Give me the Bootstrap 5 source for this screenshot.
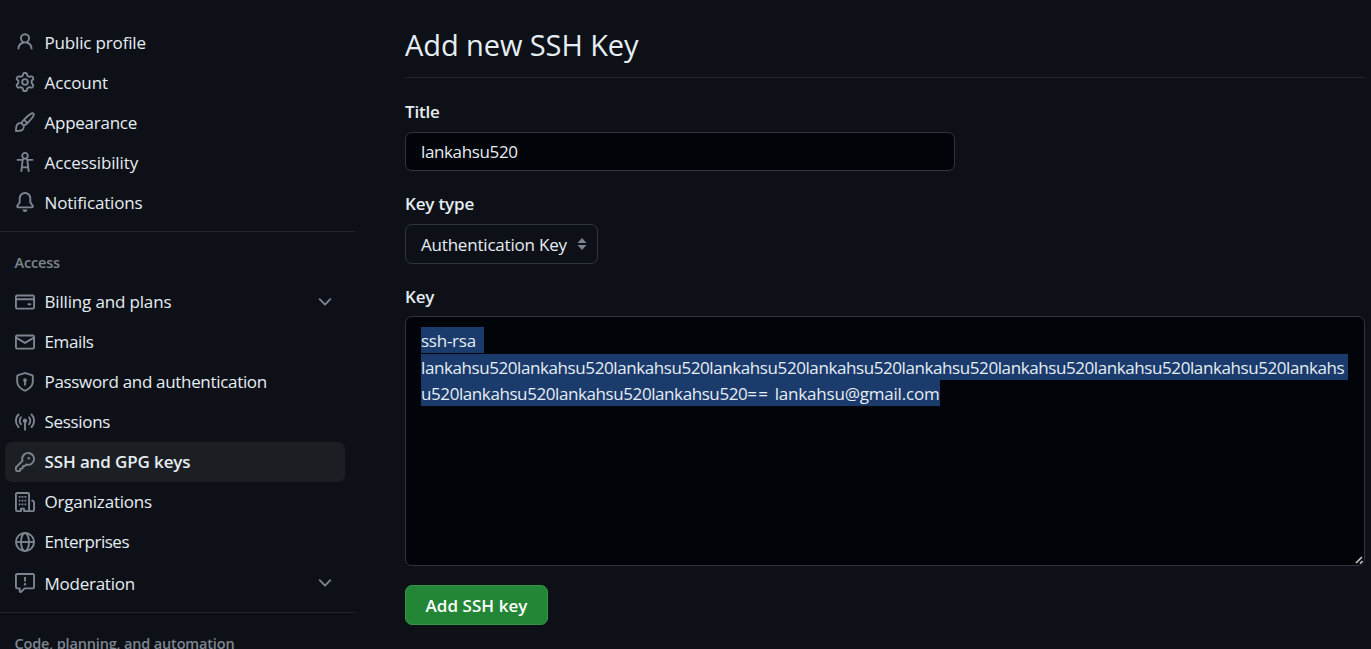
<!DOCTYPE html>
<html lang="en" data-bs-theme="dark">
<head>
<meta charset="utf-8">
<title>Add new SSH Key</title>
<meta name="viewport" content="width=device-width, initial-scale=1">
<link href="https://cdn.jsdelivr.net/npm/bootstrap@5.3.0/dist/css/bootstrap.min.css" rel="stylesheet">
<style>
  body { background: #0d1117; color: #e6edf3; font: 17px/26px "Open Sans", "Noto Sans", sans-serif; letter-spacing: -.16px; height: 649px; overflow: hidden; }
  .sidebar { width: 355px; padding-top: 22px; }
  .side-link { height: 40px; margin: 0 10px 0 5px; padding: 0 10px; gap: 9.5px; border-radius: 7px; color: #e6edf3; white-space: nowrap; }
  .side-link.active { background: #1b1f23; font-weight: 600; letter-spacing: -.125px; }
  .side-link svg { width: 20px; height: 20px; fill: #7d8590; flex: none; }
  .side-link .globe { fill: none; stroke: #7d8590; stroke-width: 1.5; }
  .side-link.tall { height: 42px; }
  .nudge span { padding-top: 2px; }
  .side-rule { height: 1px; background: #21262d; margin: 9px 0 18px; }
  .side-rule.last { margin-top: 8px; }
  .side-head { font-size: 14.5px; font-weight: 600; color: #7d8590; padding-left: 14.5px; margin-bottom: 5.5px; white-space: nowrap; }
  .ls-10 { letter-spacing: -.1px; }
  .ls-20 { letter-spacing: -.2px; }
  .ls-25 { letter-spacing: -.25px; }
  .ls-32 { letter-spacing: -.32px; }
  .ls-37 { letter-spacing: -.368px; }
  .ls-41 { letter-spacing: -.412px; }
  .ls-48 { letter-spacing: -.48px; }
  .ls-wide { letter-spacing: 1.2px; }
  .content { margin-left: 50px; width: 960px; }
  h1 { color: #e6edf3; font-size: 29px; line-height: 45px; font-weight: 400; letter-spacing: -.08px; padding: 22px 0 10px; margin: 0 0 21px; border-bottom: 1px solid #21262d; }
  .field-label { font-weight: 600; height: 26px; margin: 20px 0 7px; display: block; width: max-content; }
  .field-label.tight { margin-bottom: 6px; }
  .form-control.field { font: inherit; color: #e6edf3; background: #010409; border: 1px solid #30363d; border-radius: 7px; padding: 0 15px; }
  .form-control.title-field { width: 550px; height: 39px; padding-top: 1px; letter-spacing: -.37px; }
  .picker { width: 193px; height: 40px; border: 1px solid #30363d; border-radius: 7px; padding: 0 10px 0 15px; }
  .picker span { padding-top: 1px; letter-spacing: -.2px; }
  .form-control.key-field { height: 250px; position: relative; padding-top: 10px; }
  .key-field .sel { background: #1a3b6b; display: block; width: max-content; height: 26px; line-height: 27px; white-space: pre; }
  .key-field .first { margin-bottom: 1px; }
  .grip { position: absolute; right: 1px; bottom: 1px; }
  .btn-add { width: 143px; height: 40px; margin-top: 19px; background: #238636; border: 1px solid #369347; border-radius: 7px; color: #fff; font-weight: 600; font-size: inherit; letter-spacing: .05px; padding: 1px 0 0; }
</style>
</head>
<body>
<div class="d-flex">
  <nav class="sidebar flex-shrink-0">
    <div class="nudge">
    <a class="side-link d-flex align-items-center text-decoration-none"><svg viewBox="0 0 16 16"><path d="M10.561 8.073a6.005 6.005 0 0 1 3.432 5.142.75.75 0 1 1-1.498.07 4.5 4.5 0 0 0-8.99 0 .75.75 0 0 1-1.498-.07 6.004 6.004 0 0 1 3.431-5.142 3.999 3.999 0 1 1 5.123 0ZM10.5 5a2.5 2.5 0 1 0-5 0 2.5 2.5 0 0 0 5 0Z"/></svg><span>Public profile</span></a>
    <a class="side-link d-flex align-items-center text-decoration-none ls-10"><svg viewBox="0 0 16 16"><path d="M8 0a8.2 8.2 0 0 1 .701.031C9.444.095 9.99.645 10.16 1.29l.288 1.107c.018.066.079.158.212.224.231.114.454.243.668.386.123.082.233.09.299.071l1.103-.303c.644-.176 1.392.021 1.82.63.27.385.506.792.704 1.218.315.675.111 1.422-.364 1.891l-.814.806c-.049.048-.098.147-.088.294.016.257.016.515 0 .772-.01.147.038.246.088.294l.814.806c.475.469.679 1.216.364 1.891a7.977 7.977 0 0 1-.704 1.217c-.428.61-1.176.807-1.82.63l-1.102-.302c-.067-.019-.177-.011-.3.071a5.909 5.909 0 0 1-.668.386c-.133.066-.194.158-.211.224l-.29 1.106c-.168.646-.715 1.196-1.458 1.26a8.006 8.006 0 0 1-1.402 0c-.743-.064-1.289-.614-1.458-1.26l-.289-1.106c-.018-.066-.079-.158-.212-.224a5.738 5.738 0 0 1-.668-.386c-.123-.082-.233-.09-.299-.071l-1.103.303c-.644.176-1.392-.021-1.82-.63a8.12 8.12 0 0 1-.704-1.218c-.315-.675-.111-1.422.363-1.891l.815-.806c.05-.048.098-.147.088-.294a6.214 6.214 0 0 1 0-.772c.01-.147-.038-.246-.088-.294l-.815-.806C.635 6.045.431 5.298.746 4.623a7.92 7.92 0 0 1 .704-1.217c.428-.61 1.176-.807 1.82-.63l1.102.302c.067.019.177.011.3-.071.214-.143.437-.272.668-.386.133-.066.194-.158.211-.224l.29-1.106C6.009.645 6.556.095 7.299.03 7.53.01 7.764 0 8 0Zm-.571 1.525c-.036.003-.108.036-.137.146l-.289 1.105c-.147.561-.549.967-.998 1.189-.173.086-.34.183-.5.29-.417.278-.97.423-1.529.27l-1.103-.303c-.109-.03-.175.016-.195.045-.22.312-.412.644-.573.99-.014.031-.021.11.059.19l.815.806c.411.406.562.957.53 1.456a4.709 4.709 0 0 0 0 .582c.032.499-.119 1.05-.53 1.456l-.815.806c-.081.08-.073.159-.059.19.162.346.353.677.573.989.02.03.085.076.195.046l1.102-.303c.56-.153 1.113-.008 1.53.27.161.107.328.204.501.29.447.222.85.629.997 1.189l.289 1.105c.029.109.101.143.137.146a6.6 6.6 0 0 0 1.142 0c.036-.003.108-.036.137-.146l.289-1.105c.147-.561.549-.967.998-1.189.173-.086.34-.183.5-.29.417-.278.97-.423 1.529-.27l1.103.303c.109.029.175-.016.195-.045.22-.313.411-.644.573-.99.014-.031.021-.11-.059-.19l-.815-.806c-.411-.406-.562-.957-.53-1.456a4.709 4.709 0 0 0 0-.582c-.032-.499.119-1.05.53-1.456l.815-.806c.081-.08.073-.159.059-.19a6.464 6.464 0 0 0-.573-.989c-.02-.03-.085-.076-.195-.046l-1.102.303c-.56.153-1.113.008-1.53-.27a4.44 4.44 0 0 0-.501-.29c-.447-.222-.85-.629-.997-1.189l-.289-1.105c-.029-.11-.101-.143-.137-.146a6.6 6.6 0 0 0-1.142 0ZM11 8a3 3 0 1 1-6 0 3 3 0 0 1 6 0ZM9.5 8a1.5 1.5 0 1 0-3.001.001A1.5 1.5 0 0 0 9.5 8Z"/></svg><span>Account</span></a>
    <a class="side-link d-flex align-items-center text-decoration-none ls-25"><svg viewBox="0 0 16 16"><path d="M11.134 1.535c.7-.509 1.416-.942 2.076-1.155.649-.21 1.463-.267 2.069.34.603.601.568 1.411.368 2.07-.202.668-.624 1.39-1.125 2.096-1.011 1.424-2.496 2.987-3.775 4.249-1.098 1.084-2.132 1.839-3.04 2.3a3.744 3.744 0 0 1-1.055 3.217c-.431.431-1.065.691-1.657.861-.614.177-1.294.287-1.914.357A21.151 21.151 0 0 1 .797 16H.743a.75.75 0 0 1-.743-.742v-.054a21.25 21.25 0 0 1 .13-2.284c.067-.647.187-1.287.358-1.914.17-.591.43-1.226.86-1.657a3.746 3.746 0 0 1 3.227-1.054c.466-.893 1.225-1.907 2.314-2.982 1.271-1.255 2.833-2.75 4.245-3.777ZM1.62 13.089c-.051.464-.086.929-.104 1.395.466-.018.932-.053 1.396-.104a10.511 10.511 0 0 0 1.668-.309c.526-.151.856-.325 1.011-.48a2.25 2.25 0 1 0-3.182-3.182c-.155.155-.329.485-.48 1.01a10.515 10.515 0 0 0-.309 1.67Zm10.396-10.34c-1.224.89-2.605 2.189-3.822 3.384l1.718 1.718c1.21-1.205 2.51-2.597 3.387-3.833.47-.662.78-1.227.912-1.662.134-.444.032-.551.009-.575h-.001V1.78c-.014-.014-.113-.113-.548.027-.432.14-.995.462-1.655.942Zm-4.832 7.266-.001.001a9.859 9.859 0 0 0 1.63-1.142L7.155 7.216a9.7 9.7 0 0 0-1.161 1.607c.482.302.889.71 1.19 1.192Z"/></svg><span>Appearance</span></a>
    <a class="side-link d-flex align-items-center text-decoration-none ls-10"><svg viewBox="0 0 16 16"><path d="M9.923 5.302c.063.063.122.129.178.198H14A.75.75 0 0 1 14 7h-3.3l.578 5.163.362 2.997a.75.75 0 0 1-1.49.18L9.868 13H6.132l-.282 2.34a.75.75 0 0 1-1.49-.18l.362-2.997L5.3 7H2a.75.75 0 0 1 0-1.5h3.9a2.54 2.54 0 0 1 .176-.198 3 3 0 1 1 3.847 0ZM9.2 7.073h-.001a1.206 1.206 0 0 0-2.398 0L6.305 11.5h3.39ZM9.5 3a1.5 1.5 0 1 0-3.001.001A1.5 1.5 0 0 0 9.5 3Z"/></svg><span>Accessibility</span></a>
    <a class="side-link d-flex align-items-center text-decoration-none"><svg viewBox="0 0 16 16"><path d="M8 16a2 2 0 0 0 1.985-1.75c.017-.137-.097-.25-.235-.25h-3.5c-.138 0-.252.113-.235.25A2 2 0 0 0 8 16ZM3 5a5 5 0 0 1 10 0v2.947c0 .05.015.098.042.139l1.703 2.555A1.519 1.519 0 0 1 13.482 13H2.518a1.516 1.516 0 0 1-1.263-2.36l1.703-2.554A.255.255 0 0 0 3 7.947Zm5-3.5A3.5 3.5 0 0 0 4.5 5v2.947c0 .346-.102.683-.294.97l-1.703 2.556a.017.017 0 0 0-.003.01l.001.006c0 .002.002.004.004.006l.006.004.007.001h10.964l.007-.001.006-.004.004-.006.001-.007a.017.017 0 0 0-.003-.01l-1.703-2.554a1.745 1.745 0 0 1-.294-.97V5A3.5 3.5 0 0 0 8 1.5Z"/></svg><span>Notifications</span></a>
    </div>
    <div class="side-rule"></div>
    <div class="side-head">Access</div>
    <a class="side-link d-flex align-items-center text-decoration-none"><svg viewBox="0 0 16 16"><path d="M10.75 9a.75.75 0 0 0 0 1.5h1.5a.75.75 0 0 0 0-1.5h-1.5Z"/><path d="M0 3.75C0 2.784.784 2 1.75 2h12.5c.966 0 1.75.784 1.75 1.75v8.5A1.75 1.75 0 0 1 14.25 14H1.75A1.75 1.75 0 0 1 0 12.25ZM14.5 6.5h-13v5.75c0 .138.112.25.25.25h12.5a.25.25 0 0 0 .25-.25Zm0-2.75a.25.25 0 0 0-.25-.25H1.75a.25.25 0 0 0-.25.25V5h13Z"/></svg><span>Billing and plans</span><svg class="ms-auto" viewBox="0 0 16 16"><path d="M12.78 5.22a.749.749 0 0 1 0 1.06l-4.25 4.25a.749.749 0 0 1-1.06 0L3.22 6.28a.749.749 0 1 1 1.06-1.06L8 8.939l3.72-3.719a.749.749 0 0 1 1.06 0Z"/></svg></a>
    <a class="side-link d-flex align-items-center text-decoration-none ls-37"><svg viewBox="0 0 16 16"><path d="M1.75 2h12.5c.966 0 1.75.784 1.75 1.75v8.5A1.75 1.75 0 0 1 14.25 14H1.75A1.75 1.75 0 0 1 0 12.25v-8.5C0 2.784.784 2 1.75 2ZM1.5 12.251c0 .138.112.25.25.25h12.5a.25.25 0 0 0 .25-.25V5.809L8.38 9.397a.75.75 0 0 1-.76 0L1.5 5.809v6.442Zm13-8.181v-.32a.25.25 0 0 0-.25-.25H1.75a.25.25 0 0 0-.25.25v.32L8 7.88Z"/></svg><span>Emails</span></a>
    <a class="side-link d-flex align-items-center text-decoration-none ls-32"><svg viewBox="0 0 16 16"><path d="m8.533.133 5.25 1.68A1.75 1.75 0 0 1 15 3.48V7c0 1.566-.32 3.182-1.303 4.682-.983 1.498-2.585 2.813-5.032 3.855a1.697 1.697 0 0 1-1.33 0c-2.447-1.042-4.049-2.357-5.032-3.855C1.32 10.182 1 8.566 1 7V3.48a1.75 1.75 0 0 1 1.217-1.667l5.25-1.68a1.748 1.748 0 0 1 1.066 0Zm-.61 1.429.001.001-5.25 1.68a.251.251 0 0 0-.174.237V7c0 1.36.275 2.666 1.057 3.859.784 1.194 2.121 2.342 4.366 3.298a.196.196 0 0 0 .154 0c2.245-.957 3.582-2.103 4.366-3.297C13.225 9.666 13.5 8.358 13.5 7V3.48a.25.25 0 0 0-.174-.238l-5.25-1.68a.25.25 0 0 0-.153 0ZM9.5 6.5c0 .536-.286 1.032-.75 1.3v2.45a.75.75 0 0 1-1.5 0V7.8A1.5 1.5 0 1 1 9.5 6.5Z"/></svg><span>Password and authentication</span></a>
    <a class="side-link d-flex align-items-center text-decoration-none ls-32"><svg viewBox="0 0 16 16"><path d="M8.75 8.582v5.668a.75.75 0 0 1-1.5 0V8.582a1.75 1.75 0 1 1 1.5 0Zm3.983-7.125a.75.75 0 0 1 1.06.026A7.976 7.976 0 0 1 16 7c0 2.139-.84 4.083-2.207 5.517a.75.75 0 1 1-1.086-1.034A6.474 6.474 0 0 0 14.5 7a6.474 6.474 0 0 0-1.793-4.483.75.75 0 0 1 .026-1.06Zm-9.466 0c.3.286.312.76.026 1.06A6.474 6.474 0 0 0 1.5 7a6.47 6.47 0 0 0 1.793 4.483.75.75 0 0 1-1.086 1.034A7.973 7.973 0 0 1 0 7c0-2.139.84-4.083 2.207-5.517a.75.75 0 0 1 1.06-.026Zm8.556 2.321A4.988 4.988 0 0 1 13 7a4.988 4.988 0 0 1-1.177 3.222.75.75 0 1 1-1.146-.967A3.487 3.487 0 0 0 11.5 7c0-.86-.309-1.645-.823-2.255a.75.75 0 0 1 1.146-.967Zm-6.492.958A3.48 3.48 0 0 0 4.5 7a3.48 3.48 0 0 0 .823 2.255.75.75 0 0 1-1.146.967A4.981 4.981 0 0 1 3 7a4.982 4.982 0 0 1 1.188-3.236.75.75 0 1 1 1.143.972Z"/></svg><span>Sessions</span></a>
    <a class="side-link active d-flex align-items-center text-decoration-none"><svg viewBox="0 0 16 16"><path d="M10.5 0a5.499 5.499 0 1 1-1.288 10.848l-.932.932a.749.749 0 0 1-.53.22H7v.75a.749.749 0 0 1-.22.53l-.5.5a.749.749 0 0 1-.53.22H5v.75a.749.749 0 0 1-.22.53l-.5.5a.749.749 0 0 1-.53.22h-2A1.75 1.75 0 0 1 0 14.25v-2c0-.199.079-.389.22-.53l4.932-4.932A5.5 5.5 0 0 1 10.5 0Zm-4 5.5c-.001.431.069.86.205 1.269a.75.75 0 0 1-.181.768L1.5 12.56v1.69c0 .138.112.25.25.25h1.69l.06-.06v-1.19a.75.75 0 0 1 .75-.75h1.19l.06-.06v-1.19a.75.75 0 0 1 .75-.75h1.19l1.023-1.025a.75.75 0 0 1 .768-.18A4 4 0 1 0 6.5 5.5ZM11 6a1 1 0 1 1 0-2 1 1 0 0 1 0 2Z"/></svg><span>SSH and GPG keys</span></a>
    <a class="side-link d-flex align-items-center text-decoration-none ls-20"><svg viewBox="0 0 16 16"><path d="M1.75 16A1.75 1.75 0 0 1 0 14.25V1.75C0 .784.784 0 1.75 0h8.5C11.216 0 12 .784 12 1.75v12.5c0 .085-.006.168-.018.25h2.268a.25.25 0 0 0 .25-.25V8.285a.25.25 0 0 0-.111-.208l-1.055-.703a.749.749 0 1 1 .832-1.248l1.055.703c.487.325.779.871.779 1.456v5.965A1.75 1.75 0 0 1 14.25 16h-3.5a.766.766 0 0 1-.197-.026c-.099.017-.2.026-.303.026h-3a.75.75 0 0 1-.75-.75V14h-1v1.25a.75.75 0 0 1-.75.75Zm-.25-1.75c0 .138.112.25.25.25H4v-1.25a.75.75 0 0 1 .75-.75h2.5a.75.75 0 0 1 .75.75v1.25h2.25a.25.25 0 0 0 .25-.25V1.75a.25.25 0 0 0-.25-.25h-8.5a.25.25 0 0 0-.25.25Z"/><path d="M3 3.1h1.4v1.4H3zM5.3 3.1h1.4v1.4H5.3zM7.6 3.1H9v1.4H7.6zM3 6.1h1.4v1.4H3zM5.3 6.1h1.4v1.4H5.3zM7.6 6.1H9v1.4H7.6zM3 9.1h1.4v1.4H3zM5.3 9.1h1.4v1.4H5.3zM7.6 9.1H9v1.4H7.6z"/></svg><span>Organizations</span></a>
    <a class="side-link d-flex align-items-center text-decoration-none ls-48"><svg class="globe" viewBox="0 0 16 16"><circle cx="8" cy="8" r="7.25"/><ellipse cx="8" cy="8" rx="3.2" ry="7.25"/><path d="M.75 8h14.5"/></svg><span>Enterprises</span></a>
    <a class="side-link tall nudge d-flex align-items-center text-decoration-none ls-25"><svg viewBox="0 0 16 16"><path d="M0 1.75C0 .784.784 0 1.75 0h12.5C15.216 0 16 .784 16 1.75v9.5A1.75 1.75 0 0 1 14.25 13H8.06l-2.573 2.573A1.458 1.458 0 0 1 3 14.543V13H1.75A1.75 1.75 0 0 1 0 11.25Zm1.75-.25a.25.25 0 0 0-.25.25v9.5c0 .138.112.25.25.25h2a.75.75 0 0 1 .75.75v2.19l2.72-2.72a.749.749 0 0 1 .53-.22h6.5a.25.25 0 0 0 .25-.25v-9.5a.25.25 0 0 0-.25-.25Zm7 2.25v2.5a.75.75 0 0 1-1.5 0v-2.5a.75.75 0 0 1 1.5 0ZM9 9a1 1 0 1 1-2 0 1 1 0 0 1 2 0Z"/></svg><span>Moderation</span><svg class="ms-auto" viewBox="0 0 16 16"><path d="M12.78 5.22a.749.749 0 0 1 0 1.06l-4.25 4.25a.749.749 0 0 1-1.06 0L3.22 6.28a.749.749 0 1 1 1.06-1.06L8 8.939l3.72-3.719a.749.749 0 0 1 1.06 0Z"/></svg></a>
    <div class="side-rule last"></div>
    <div class="side-head">Code, planning, and automation</div>
  </nav>
  <main class="content">
    <h1>Add new SSH Key</h1>
    <label class="field-label ls-20">Title</label>
    <div class="form-control field title-field d-flex align-items-center">lankahsu520</div>
    <label class="field-label">Key type</label>
    <div class="picker d-flex align-items-center justify-content-between"><span>Authentication Key</span><svg width="10" height="12"><path d="M5 0l4.5 5h-9zM5 12l4.5-5h-9z" fill="#7d8590"/></svg></div>
    <label class="field-label tight">Key</label>
    <div class="form-control field key-field"><span class="sel first ls-25">ssh-rsa  </span><span class="sel ls-41">lankahsu520lankahsu520lankahsu520lankahsu520lankahsu520lankahsu520lankahsu520lankahsu520lankahsu520lankahs </span><span class="sel"><span class="ls-41">u520lankahsu520lankahsu520lankahsu520</span><span class="ls-wide">== </span><span class="ls-20">lankahsu@gmail.com</span></span>
      <svg class="grip" width="8" height="8"><path d="M1 7L7 1M5 7.5L7.5 5" stroke="#c8c8c8" stroke-width="1.6"/></svg>
    </div>
    <button class="btn btn-add">Add SSH key</button>
  </main>
</div>
<script src="https://cdn.jsdelivr.net/npm/bootstrap@5.3.0/dist/js/bootstrap.bundle.min.js"></script>
</body>
</html>
